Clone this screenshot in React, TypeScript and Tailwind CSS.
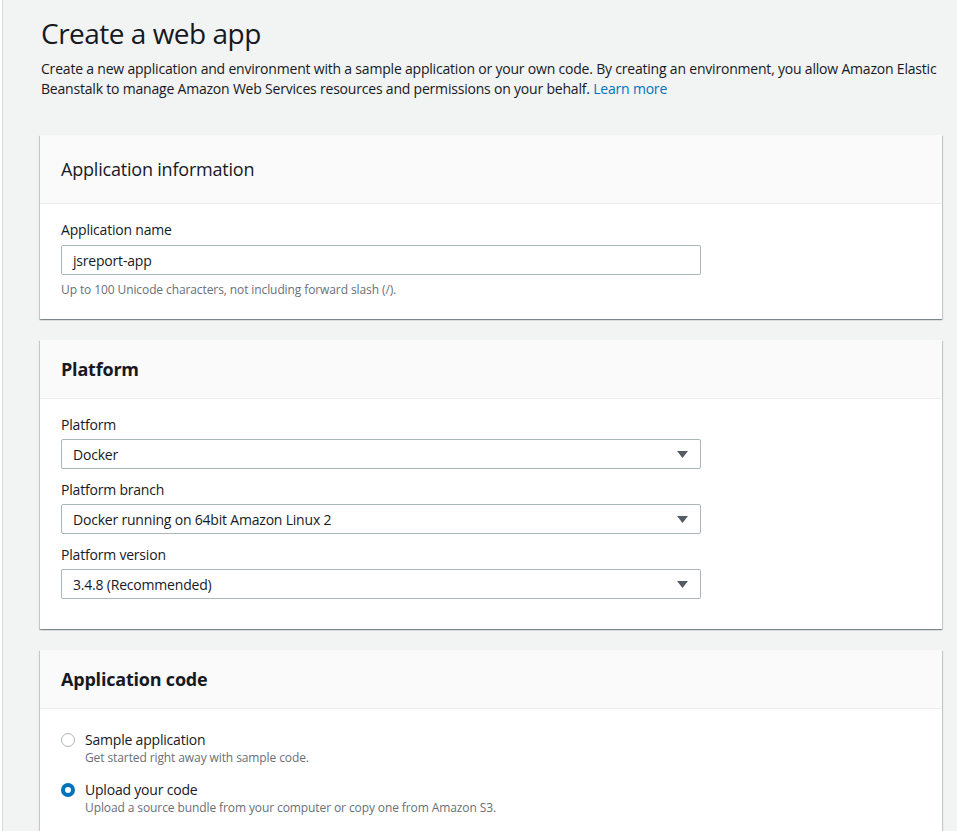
import React from "react";

const font = { fontFamily: '"Open Sans", "Liberation Sans", Arial, sans-serif' };

interface SelectProps {
  value: string;
}

const SelectBox: React.FC<SelectProps> = ({ value }) => (
  <div className="flex items-center justify-between w-[640px] h-[30px] border border-[#aab7b8] rounded-[2px] bg-white pl-[11px] pr-[12px]">
    <span className="text-[14px] tracking-[-0.2px] text-[#16191f]">{value}</span>
    <svg width="11" height="7" viewBox="0 0 11 7" className="fill-[#545b64]">
      <path d="M0 0 H11 L5.5 7 Z" />
    </svg>
  </div>
);

const Card: React.FC<{ title: string; bold?: boolean; headerClass: string; bodyClass: string; children: React.ReactNode }> = ({
  title,
  bold,
  headerClass,
  bodyClass,
  children,
}) => (
  <div className="w-[902px] bg-white shadow-[0_1px_1px_0_rgba(0,28,36,0.3),1px_1px_1px_0_rgba(0,28,36,0.15),-1px_1px_1px_0_rgba(0,28,36,0.15)]">
    <div className={`bg-[#fafafa] border-b border-[#eaeded] px-[21px] flex items-center ${headerClass}`}>
      <h2 className={`text-[18px] tracking-[-0.2px] text-[#16191f] ${bold ? "font-bold" : "font-normal"}`}>{title}</h2>
    </div>
    <div className={`px-[21px] ${bodyClass}`}>{children}</div>
  </div>
);

const Radio: React.FC<{ checked?: boolean; label: string; desc: string }> = ({ checked, label, desc }) => (
  <div className="flex items-start gap-[10px]">
    <div
      className={`mt-[3px] w-[14px] h-[14px] rounded-full bg-white ${
        checked ? "border-[4px] border-[#0073bb]" : "border border-[#aab7b8]"
      }`}
    />
    <div className="flex flex-col">
      <span className="text-[14px] leading-[20px] tracking-[-0.2px] text-[#16191f]">{label}</span>
      <span className="text-[12px] leading-[16px] tracking-[-0.1px] text-[#687078]">{desc}</span>
    </div>
  </div>
);

export default function App() {
  return (
    <div className="min-h-[831px] bg-[#f2f3f3] flex" style={font}>
      <div className="w-[2px] bg-white" />
      <div className="w-px bg-[#d5dbdb]" />
      <div className="flex-1 pl-[37px] pt-[15px] pb-[40px]">
        {/* Heading */}
        <h1 className="text-[28px] leading-[36px] tracking-[-0.5px] text-[#16191f] font-normal pl-[1px]">Create a web app</h1>
        <p className="mt-[8px] text-[14px] leading-[20px] tracking-[-0.2px] text-[#16191f] pl-[1px] w-[905px]">
          Create a new application and environment with a sample application or your own code. By creating an
          environment, you allow Amazon Elastic Beanstalk to manage Amazon Web Services resources and permissions on
          your behalf. <a className="text-[#0073bb]">Learn more</a>
        </p>

        <div className="mt-[36px] flex flex-col gap-[21px]">
          {/* Application information */}
          <Card title="Application information" headerClass="h-[69px]" bodyClass="pt-[16px] pb-[21px]">
            <label className="block text-[14px] leading-[20px] tracking-[-0.2px] text-[#16191f]">Application name</label>
            <div className="mt-[5px] w-[640px] h-[30px] border border-[#aab7b8] rounded-[2px] pl-[11px] flex items-center">
              <span className="text-[14px] tracking-[-0.2px] text-[#16191f]">jsreport-app</span>
            </div>
            <p className="mt-[7px] text-[12px] leading-[16px] tracking-[-0.1px] text-[#687078]">
              Up to 100 Unicode characters, not including forward slash (/).
            </p>
          </Card>

          {/* Platform */}
          <Card title="Platform" bold headerClass="h-[59px]" bodyClass="pt-[16px] pb-[30px]">
            <div className="flex flex-col gap-[11px]">
              <div>
                <label className="block text-[14px] leading-[20px] tracking-[-0.2px] text-[#16191f]">Platform</label>
                <div className="mt-[4px]">
                  <SelectBox value="Docker" />
                </div>
              </div>
              <div>
                <label className="block text-[14px] leading-[20px] tracking-[-0.2px] text-[#16191f]">Platform branch</label>
                <div className="mt-[4px]">
                  <SelectBox value="Docker running on 64bit Amazon Linux 2" />
                </div>
              </div>
              <div>
                <label className="block text-[14px] leading-[20px] tracking-[-0.2px] text-[#16191f]">Platform version</label>
                <div className="mt-[4px]">
                  <SelectBox value="3.4.8 (Recommended)" />
                </div>
              </div>
            </div>
          </Card>

          {/* Application code */}
          <Card title="Application code" bold headerClass="h-[59px]" bodyClass="pt-[21px] pb-[30px]">
            <div className="flex flex-col gap-[14px]">
              <Radio label="Sample application" desc="Get started right away with sample code." />
              <Radio checked label="Upload your code" desc="Upload a source bundle from your computer or copy one from Amazon S3." />
            </div>
          </Card>
        </div>
      </div>
    </div>
  );
}
